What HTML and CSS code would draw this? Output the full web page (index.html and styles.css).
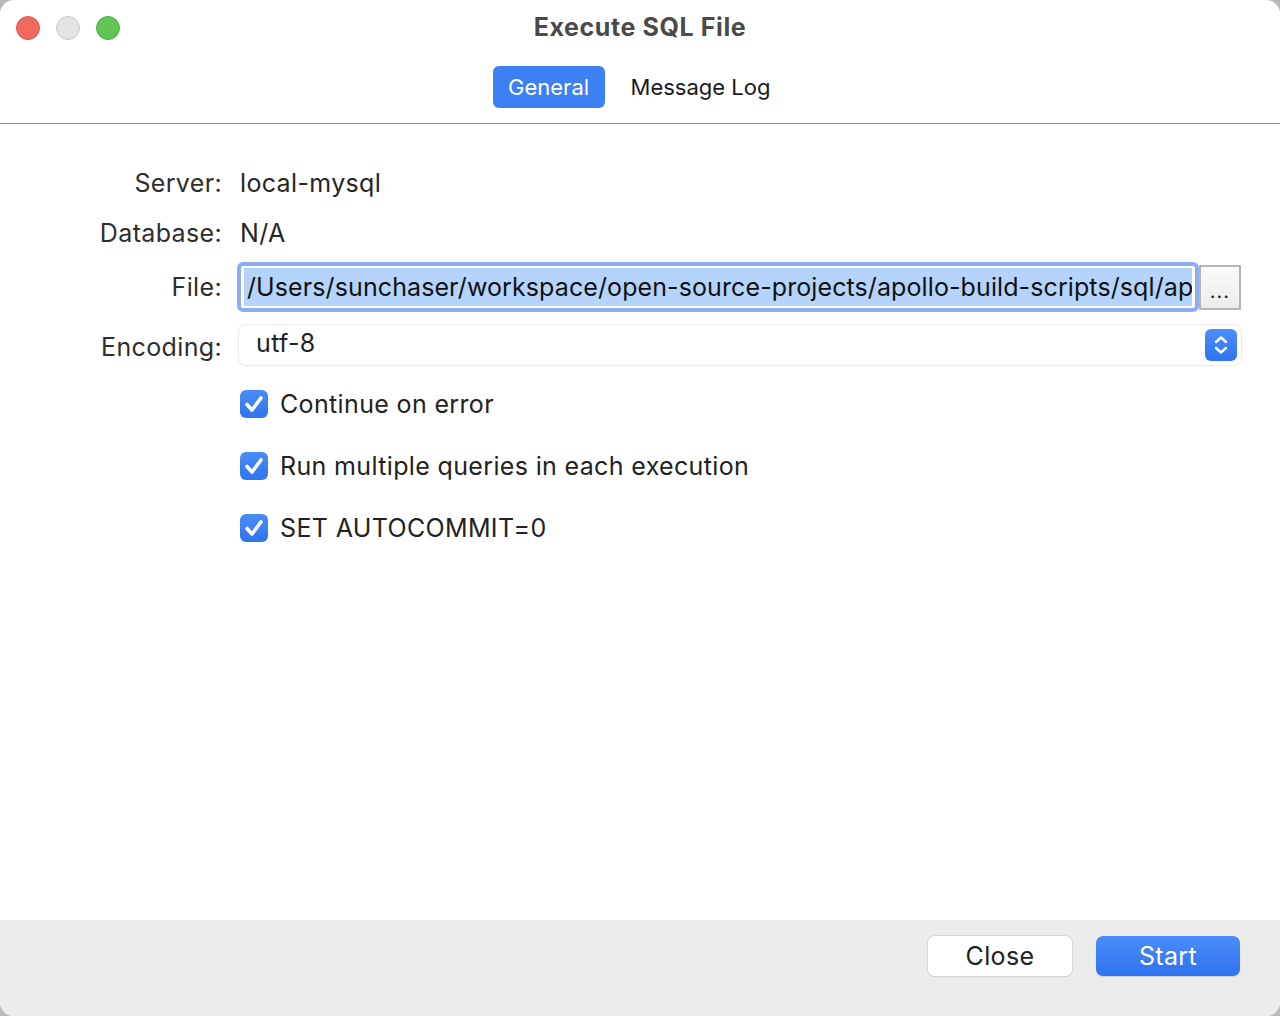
FILE: index.html
```html
<!DOCTYPE html>
<html>
<head>
<meta charset="utf-8">
<link rel="stylesheet" href="styles.css">
</head>
<body>
<div class="window">
  <header class="titlebar">
    <div class="lights">
      <span class="light red"></span>
      <span class="light gray"></span>
      <span class="light green"></span>
    </div>
    <div class="title">Execute SQL File</div>
    <nav class="tabs">
      <span class="tab active">General</span>
      <span class="tab">Message Log</span>
    </nav>
  </header>
  <main class="content">
    <div class="form">
      <div class="label row-server">Server:</div>
      <div class="value row-server">local-mysql</div>
      <div class="label row-db">Database:</div>
      <div class="value row-db">N/A</div>
      <div class="label row-file">File:</div>
      <div class="file-row">
        <div class="file-input"><span class="sel">/Users/sunchaser/workspace/open-source-projects/apollo-build-scripts/sql/ap</span></div>
        <div class="browse">...</div>
      </div>
      <div class="label row-enc">Encoding:</div>
      <div class="select">
        <span class="select-text">utf-8</span>
        <span class="stepper">
          <svg width="32" height="32" viewBox="0 0 32 32"><path d="M11 13 L16 8.5 L21 13" fill="none" stroke="#fff" stroke-width="2.4" stroke-linecap="round" stroke-linejoin="round"/><path d="M11 19 L16 23.5 L21 19" fill="none" stroke="#fff" stroke-width="2.4" stroke-linecap="round" stroke-linejoin="round"/></svg>
        </span>
      </div>
      <div class="checks">
        <label class="check"><span class="box"><svg width="28" height="28" viewBox="0 0 28 28"><path d="M7 14.5 L12 20 L21 8" fill="none" stroke="#fff" stroke-width="3.6" stroke-linecap="round" stroke-linejoin="round"/></svg></span>Continue on error</label>
        <label class="check"><span class="box"><svg width="28" height="28" viewBox="0 0 28 28"><path d="M7 14.5 L12 20 L21 8" fill="none" stroke="#fff" stroke-width="3.6" stroke-linecap="round" stroke-linejoin="round"/></svg></span>Run multiple queries in each execution</label>
        <label class="check"><span class="box"><svg width="28" height="28" viewBox="0 0 28 28"><path d="M7 14.5 L12 20 L21 8" fill="none" stroke="#fff" stroke-width="3.6" stroke-linecap="round" stroke-linejoin="round"/></svg></span>SET AUTOCOMMIT=0</label>
      </div>
    </div>
  </main>
  <footer class="footer">
    <button class="btn close">Close</button>
    <button class="btn start">Start</button>
  </footer>
</div>
</body>
</html>
```

FILE: styles.css
```css
* { box-sizing: border-box; }
html, body {
  margin: 0;
  padding: 0;
  background: #b8b8b8;
  font-family: Inter, "Noto Sans", "Liberation Sans", sans-serif;
}
.window {
  width: 1280px;
  height: 1016px;
  background: #fff;
  border-radius: 14px;
  overflow: hidden;
  display: flex;
  flex-direction: column;
  color: #222;
}
.titlebar {
  height: 124px;
  border-bottom: 1px solid #8e8e8e;
  position: relative;
  display: flex;
  flex-direction: column;
  align-items: center;
}
.lights {
  position: absolute;
  left: 16px;
  top: 16px;
  display: flex;
  gap: 16px;
}
.light {
  width: 24px;
  height: 24px;
  border-radius: 50%;
  display: block;
}
.light.red { background: #ee6a5e; border: 1px solid #d9574c; }
.light.gray { background: #e3e3e3; border: 1px solid #cbcbcb; }
.light.green { background: #60c554; border: 1px solid #4fae45; }
.title {
  margin-top: 11px;
  font-size: 25px;
  font-weight: 700;
  color: #4a4a4a;
  line-height: 32px;
  letter-spacing: 0.6px;
}
.tabs {
  margin-top: 23px;
  display: flex;
  align-items: center;
  gap: 9px;
}
.tab {
  font-size: 22px;
  height: 42px;
  line-height: 42px;
  padding: 0 17px;
  border-radius: 6px;
  color: #1a1a1a;
}
.tab.active {
  background: #3d80f3;
  color: #fff;
  width: 112px;
  padding: 0;
  text-align: center;
}
.content {
  flex: 1;
}
.form {
  display: grid;
  grid-template-columns: 222px minmax(0, 1fr);
  column-gap: 18px;
  padding-right: 39px;
  padding-top: 39px;
  font-size: 25px;
  letter-spacing: 0.35px;
  color: #262626;
}
.label {
  color: #2e2e2e;
  display: flex;
  align-items: center;
  justify-content: flex-end;
}
.value { display: flex; align-items: center; }
.row-server { height: 40px; }
.row-db { height: 40px; margin-top: 10px; }
.row-file { height: 50px; margin-top: 9px; }
.row-enc { height: 40px; margin-top: 13px; position: relative; top: 2px; }
.file-row {
  margin-top: 9px;
  height: 50px;
  display: flex;
  align-items: center;
  margin-left: -3px;
  min-width: 0;
}
.file-input {
  flex: 1;
  min-width: 0;
  height: 50px;
  border: 4px solid #8caef0;
  border-radius: 6px;
  padding: 2px 3px;
  overflow: hidden;
  white-space: nowrap;
  background: #fff;
  display: flex;
  align-items: center;
}
.sel {
  background: #b4d4fd;
  color: #111;
  line-height: 38px;
  padding-left: 3px;
  display: block;
  font-size: 25px;
  letter-spacing: 0.1px;
  flex: 1;
  overflow: hidden;
  white-space: nowrap;
}
.browse {
  width: 42px;
  flex: none;
  height: 45px;
  border: 2px solid #b5b5b5;
  background: linear-gradient(#fbfbfb, #ececec);
  font-size: 20px;
  text-align: center;
  line-height: 48px;
  color: #222;
  letter-spacing: 1px;
}
.select {
  margin-top: 13px;
  margin-left: -1px;
  height: 40px;
  border-radius: 7px;
  background: #fff;
  box-shadow: 0 0 0 1px #ededed, 0 1px 1px rgba(0,0,0,0.10);
  display: flex;
  align-items: center;
  justify-content: space-between;
  padding-left: 17px;
  padding-right: 4px;
  min-width: 0;
}
.select-text { font-size: 25px; color: #222; position: relative; top: -2px; }
.stepper {
  width: 32px;
  height: 32px;
  border-radius: 6px;
  background: linear-gradient(#4d8ff8, #2f73f1);
  display: block;
}
.stepper svg { display: block; }
.checks {
  grid-column: 2;
  display: flex;
  flex-direction: column;
  gap: 34px;
  margin-top: 25px;
}
.check {
  display: flex;
  align-items: center;
  gap: 12px;
  height: 28px;
  color: #222;
}
.box {
  width: 28px;
  height: 28px;
  border-radius: 6px;
  background: linear-gradient(#4a8cf7, #2f74f0);
  display: block;
}
.box svg { display: block; }
.footer {
  height: 96px;
  background: #ebebeb;
  display: flex;
  justify-content: flex-end;
  align-items: flex-start;
  gap: 24px;
  padding: 16px 40px 0 0;
}
.btn {
  width: 144px;
  height: 40px;
  border-radius: 7px;
  font-family: inherit;
  font-size: 25px;
  letter-spacing: 0.35px;
  border: none;
  padding: 0;
}
.btn.close {
  background: #fff;
  color: #222;
  box-shadow: 0 0 0 1px #d6d6d6, 0 1px 1px rgba(0,0,0,0.2);
}
.btn.start {
  background: linear-gradient(#4a8cf7, #2f72f0);
  color: #fff;
  box-shadow: 0 1px 1px rgba(0,0,0,0.12);
}
```
